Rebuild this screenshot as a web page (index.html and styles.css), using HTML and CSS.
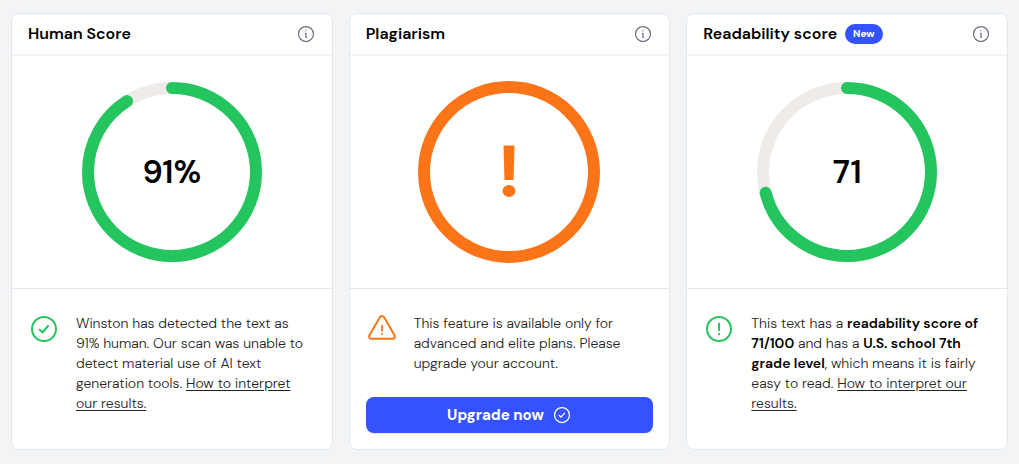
FILE: index.html
```
<!DOCTYPE html>
<html lang="en">
<head>
  <meta charset="UTF-8">
  <meta name="viewport" content="width=device-width, initial-scale=1">
  <title>Scan results</title>
  <link rel="stylesheet" href="styles.css">
</head>
<body>

  <!-- shared icons -->
  <svg class="sprite" aria-hidden="true">
    <symbol id="icon-info" viewBox="0 0 256 256">
      <circle cx="128" cy="128" r="96" />
      <path d="M120 120h8v52h8" />
      <path d="M126 86v1" />
    </symbol>
    <symbol id="icon-check" viewBox="0 0 256 256">
      <circle cx="128" cy="128" r="96" />
      <path d="M94 134l22 22 44-52" />
    </symbol>
    <symbol id="icon-alert" viewBox="0 0 256 256">
      <circle cx="128" cy="128" r="96" />
      <path d="M128 84v52" />
      <path d="M128 167v2" />
    </symbol>
    <symbol id="icon-warning" viewBox="0 0 256 256">
      <path d="M110 35 28 178c-8 14 1 28 17 28h166c16 0 25-14 17-28L146 35c-8-14-28-14-36 0z" />
      <path stroke-width="14" d="M128 100v42" />
      <path stroke-width="14" d="M128 167v2" />
    </symbol>
  </svg>

  <main class="results">
    <section class="card">
      <header class="card-header">
        <h2 class="card-title">Human Score</h2>
        <button type="button" class="info-button" aria-label="About human score">
          <svg class="icon"><use href="#icon-info" /></svg>
        </button>
      </header>
      <div class="gauge">
        <svg class="gauge-ring" viewBox="0 0 182 182" aria-hidden="true">
          <circle class="track" cx="91" cy="91" r="84" />
          <circle class="value" cx="91" cy="91" r="84" pathLength="100" stroke-dasharray="91 100" transform="rotate(-90 91 91)" />
        </svg>
        <span class="gauge-label">91%</span>
      </div>
      <div class="card-footer">
        <div class="message">
          <svg class="message-icon success"><use href="#icon-check" /></svg>
          <p class="message-text">Winston has detected the text as 91% human. Our scan was unable to detect material use of AI text generation tools. <a href="#">How to interpret our results.</a></p>
        </div>
      </div>
    </section>

    <section class="card">
      <header class="card-header">
        <h2 class="card-title">Plagiarism</h2>
        <button type="button" class="info-button" aria-label="About plagiarism">
          <svg class="icon"><use href="#icon-info" /></svg>
        </button>
      </header>
      <div class="gauge">
        <svg class="gauge-ring" viewBox="0 0 182 182" aria-hidden="true">
          <circle class="locked" cx="91" cy="91" r="85" />
          <path class="mark" d="M85.500 64.500h11l-1 34.500h-9z" />
          <ellipse class="mark" cx="91" cy="110" rx="6.500" ry="6" />
        </svg>
      </div>
      <div class="card-footer">
        <div class="message">
          <svg class="message-icon warning"><use href="#icon-warning" /></svg>
          <p class="message-text">This feature is available only for advanced and elite plans. Please upgrade your account.</p>
        </div>
        <button type="button" class="upgrade-button">
          Upgrade now
          <svg class="icon"><use href="#icon-check" /></svg>
        </button>
      </div>
    </section>

    <section class="card">
      <header class="card-header">
        <h2 class="card-title">Readability score</h2>
        <span class="badge">New</span>
        <button type="button" class="info-button" aria-label="About readability score">
          <svg class="icon"><use href="#icon-info" /></svg>
        </button>
      </header>
      <div class="gauge">
        <svg class="gauge-ring" viewBox="0 0 182 182" aria-hidden="true">
          <circle class="track" cx="91" cy="91" r="84" />
          <circle class="value" cx="91" cy="91" r="84" pathLength="100" stroke-dasharray="71 100" transform="rotate(-90 91 91)" />
        </svg>
        <span class="gauge-label">71</span>
      </div>
      <div class="card-footer">
        <div class="message">
          <svg class="message-icon success"><use href="#icon-alert" /></svg>
          <p class="message-text">This text has a <strong>readability score of 71/100</strong> and has a <strong>U.S. school 7th grade level</strong>, which means it is fairly easy to read. <a href="#">How to interpret our results.</a></p>
        </div>
      </div>
    </section>
  </main>

</body>
</html>
```
FILE: styles.css
```
* {
  box-sizing: border-box;
}
body {
  margin: 0;
  background: #f3f4f6;
  color: #000;
  font-family: "DM Sans", Inter, "Liberation Sans", sans-serif;
  font-size: 14px;
  line-height: 20px;
  font-optical-sizing: none;
}
.sprite {
  position: absolute;
  width: 0;
  height: 0;
}
.results {
  display: grid;
  grid-template-columns: repeat(auto-fit, minmax(300px, 1fr));
  gap: 16px;
  padding: 13px 11px;
}
.card {
  display: flex;
  flex-direction: column;
  background: #fff;
  border: 1px solid #e2e8f0;
  border-radius: 8px;
}
.card-header {
  display: flex;
  align-items: center;
  gap: 8px;
  height: 42px;
  padding: 0 16px;
  border-bottom: 2px solid #f3f4f6;
}
.card-title {
  margin: 0;
  font-size: 16px;
  font-weight: 600;
}
.badge {
  padding: 0 8px;
  border-radius: 12px;
  background: #3452ff;
  color: #fff;
  font-size: 10px;
  font-weight: 800;
}
.info-button {
  display: flex;
  margin-left: auto;
  padding: 0;
  border: none;
  background: none;
  color: #6b7280;
  cursor: pointer;
}
.icon,
.message-icon {
  flex-shrink: 0;
  fill: none;
  stroke: currentColor;
  stroke-width: 16;
  stroke-linecap: round;
  stroke-linejoin: round;
}
.icon {
  width: 20px;
  height: 20px;
}
.gauge {
  display: grid;
  place-items: center;
  padding: 25px 16px;
  border-bottom: 1px solid #e5e7eb;
}
.gauge-ring,
.gauge-label {
  grid-area: 1 / 1;
}
.gauge-ring {
  width: 182px;
  height: 182px;
  fill: none;
  stroke-width: 12;
}
.track {
  stroke: #eeebe9;
}
.value {
  stroke: #24c55f;
  stroke-linecap: round;
}
.locked {
  stroke: #fb7417;
}
.mark {
  fill: #fb7417;
}
.gauge-label {
  font-size: 32px;
  font-weight: 600;
  line-height: 36px;
}
.card-footer {
  display: flex;
  flex-direction: column;
  gap: 24px;
  padding: 24px 16px 16px;
}
.message {
  display: flex;
  align-items: flex-start;
  gap: 16px;
}
.message-icon {
  width: 32px;
  height: 32px;
}
.success {
  color: #24c55f;
}
.warning {
  color: #fb7417;
}
.message-text {
  margin: 0;
  padding-right: 8px;
  color: #222;
  font-weight: 300;
}
.message-text strong {
  color: #000;
  font-weight: 600;
}
.message-text a {
  color: inherit;
  text-underline-offset: 2px;
}
.upgrade-button {
  display: flex;
  align-items: center;
  justify-content: center;
  gap: 8px;
  height: 36px;
  border: none;
  border-radius: 8px;
  background: #3452ff;
  color: #fff;
  font: inherit;
  font-size: 15px;
  font-weight: 800;
  box-shadow: 0 1px 2px rgba(0, 0, 0, 0.1);
  cursor: pointer;
}
.upgrade-button:hover {
  background: #2743e6;
}
```
